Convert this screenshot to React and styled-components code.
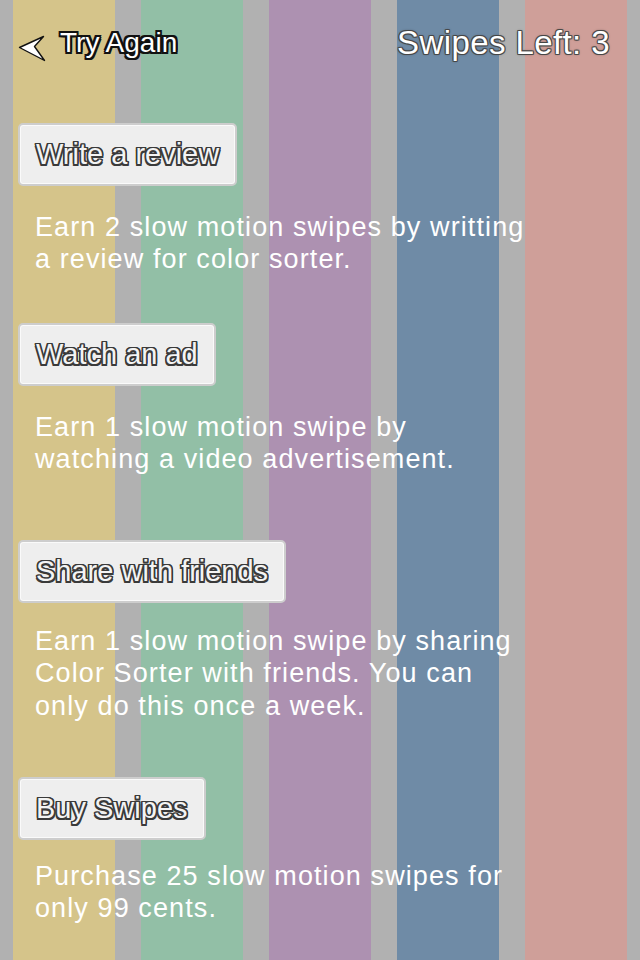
import React from "react";
import styled, { createGlobalStyle } from "styled-components";

const GRAY = "#b1b1b1";
const STRIPES = ["#d5c48a", "#92bfa6", "#ad91b1", "#6f8ba6", "#cf9f99"];

const stripeGradient = (() => {
  const stops = [];
  let x = 0;
  const push = (c, w) => {
    stops.push(`${c} ${x}px`, `${c} ${x + w}px`);
    x += w;
  };
  push(GRAY, 13);
  STRIPES.forEach((c, i) => {
    push(c, 102);
    push(GRAY, i === STRIPES.length - 1 ? 13 : 26);
  });
  return `linear-gradient(to right, ${stops.join(", ")})`;
})();

const GlobalStyle = createGlobalStyle`
  html, body { margin: 0; padding: 0; }
  body {
    width: 640px;
    height: 960px;
    overflow: hidden;
    font-family: "Liberation Sans", Arial, sans-serif;
  }
`;

const outline = (c, d = 1) =>
  [
    [d, 0], [-d, 0], [0, d], [0, -d],
    [d, d], [-d, d], [d, -d], [-d, -d],
  ]
    .map(([a, b]) => `${a}px ${b}px 0 ${c}`)
    .join(", ");

const Screen = styled.div`
  width: 640px;
  min-height: 960px;
  background: ${stripeGradient};
  display: flex;
  flex-direction: column;
`;

const Header = styled.header`
  height: 88px;
  display: flex;
  align-items: center;
  justify-content: space-between;
  padding: 0 30px 0 18px;
  box-sizing: border-box;
`;

const BackLink = styled.div`
  display: flex;
  align-items: center;
  gap: 14px;
`;

const ArrowSvg = styled.svg`
  display: block;
  margin-top: 9px;
`;

const BackLabel = styled.span`
  font-size: 28px;
  color: #ffffff;
  text-shadow: ${outline("#111", 2)}, ${outline("#111", 1)};
  line-height: 1;
  margin-top: -2px;
`;

const Counter = styled.span`
  font-size: 33px;
  color: #ffffff;
  line-height: 1;
  letter-spacing: 0.4px;
  text-shadow: ${outline("rgba(70,70,70,0.8)", 1)}, 0 0 2.5px #333;
  margin-top: -4px;
`;

const Content = styled.main`
  display: flex;
  flex-direction: column;
  padding: 0 18px;
`;

const ActionButton = styled.button`
  align-self: flex-start;
  height: 63px;
  margin-top: ${(p) => p.$top}px;
  padding: 0 16px;
  background: #eeeeee;
  border: 2px solid #cdcdcd;
  border-radius: 5px;
  box-shadow: inset 0 0 0 1px #fafafa;
  font-family: "Liberation Sans", Arial, sans-serif;
  font-size: 29px;
  color: #f4f4f4;
  text-shadow: ${outline("#3a3a3a", 1.5)}, ${outline("#3a3a3a", 1)};
  cursor: pointer;
`;

const Description = styled.p`
  margin: ${(p) => p.$top}px 0 0;
  padding-left: 17px;
  font-size: 27px;
  line-height: 32.3px;
  letter-spacing: 1.1px;
  color: #ffffff;
  white-space: nowrap;
`;

const BackArrow = () => (
  <ArrowSvg width="28" height="27" viewBox="0 0 28 27">
    <polygon
      points="1.5,12.5 25.5,1.5 16.5,11.5 26.5,25.5"
      fill="#ffffff"
      stroke="#111"
      strokeWidth="1.4"
      strokeLinejoin="round"
    />
  </ArrowSvg>
);

const sections = [
  {
    label: "Write a review",
    btnTop: 35,
    descTop: 25,
    lines: ["Earn 2 slow motion swipes by writting", "a review for color sorter."],
  },
  {
    label: "Watch an ad",
    btnTop: 47,
    descTop: 25,
    lines: ["Earn 1 slow motion swipe by", "watching a video advertisement."],
  },
  {
    label: "Share with friends",
    btnTop: 65,
    descTop: 22,
    lines: [
      "Earn 1 slow motion swipe by sharing",
      "Color Sorter with friends. You can",
      "only do this once a week.",
    ],
  },
  {
    label: "Buy Swipes",
    btnTop: 55,
    descTop: 20,
    lines: ["Purchase 25 slow motion swipes for", "only 99 cents."],
  },
];

export default function App() {
  return (
    <>
      <GlobalStyle />
      <Screen>
        <Header>
          <BackLink>
            <BackArrow />
            <BackLabel>Try Again</BackLabel>
          </BackLink>
          <Counter>Swipes Left: 3</Counter>
        </Header>
        <Content>
          {sections.map((s) => (
            <React.Fragment key={s.label}>
              <ActionButton $top={s.btnTop}>{s.label}</ActionButton>
              <Description $top={s.descTop}>
                {s.lines.map((l, i) => (
                  <React.Fragment key={i}>
                    {l}
                    {i < s.lines.length - 1 && <br />}
                  </React.Fragment>
                ))}
              </Description>
            </React.Fragment>
          ))}
        </Content>
      </Screen>
    </>
  );
}
